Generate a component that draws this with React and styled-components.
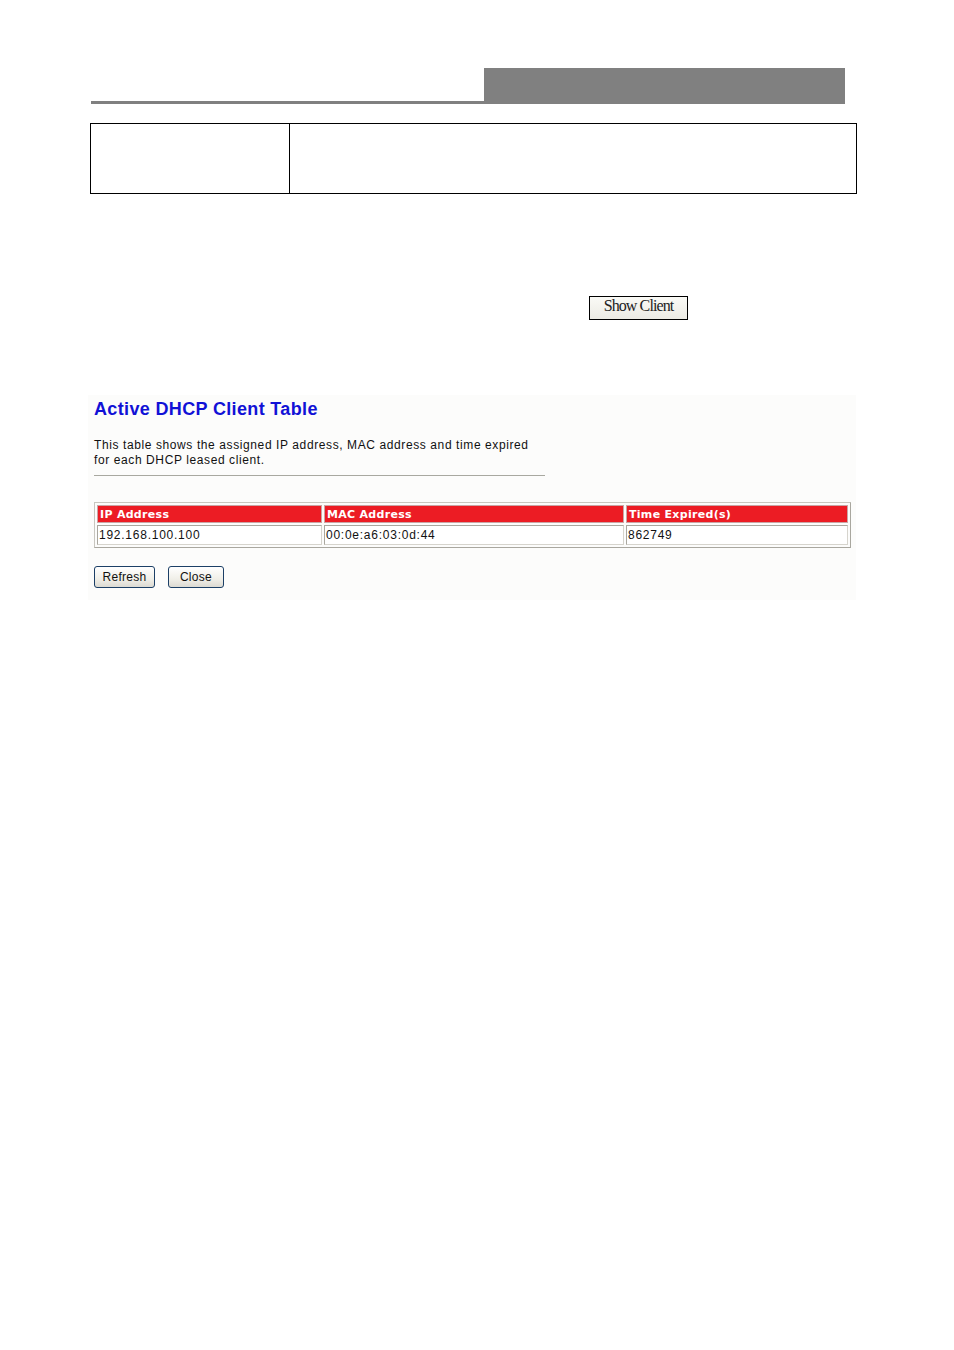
import React from "react";
import styled, { createGlobalStyle } from "styled-components";

const Global = createGlobalStyle`
  html, body { margin: 0; padding: 0; background: #fff; }
  body { font-family: "Liberation Sans", Arial, sans-serif; }
`;

const Page = styled.div`
  width: 954px;
  height: 1350px;
  padding-top: 68px;
  box-sizing: border-box;
`;

const Header = styled.div`
  display: flex;
  align-items: flex-end;
  margin-left: 91px;
  width: 754px;
`;

const HeaderRule = styled.div`
  flex: 1;
  height: 3px;
  background: #808080;
`;

const HeaderBlock = styled.div`
  width: 361px;
  height: 36px;
  background: #808080;
`;

const InfoBox = styled.div`
  display: grid;
  grid-template-columns: 198px 1fr;
  margin: 19px 0 0 90px;
  width: 767px;
  height: 71px;
  box-sizing: border-box;
  border: 1px solid #000;
`;

const InfoCell = styled.div`
  border-left: ${(p) => (p.$divider ? "1px solid #000" : "none")};
`;

const ShowRow = styled.div`
  margin: 102px 0 0 589px;
`;

const ShowButton = styled.button`
  width: 99px;
  height: 24px;
  box-sizing: border-box;
  border: 1px solid #000;
  background: linear-gradient(#fafaf6, #ecebe4);
  font-family: "Liberation Serif", "Times New Roman", serif;
  font-size: 16px;
  letter-spacing: -0.9px;
  color: #222;
  padding: 0 0 5px;
  line-height: 18px;
`;

const Panel = styled.div`
  margin: 75px 0 0 88px;
  width: 768px;
  height: 205px;
  box-sizing: border-box;
  background: #fcfcfb;
  padding: 3px 0 0 6px;
`;

const Title = styled.h1`
  margin: 0;
  font-family: "Liberation Sans", Arial, sans-serif;
  font-weight: bold;
  font-size: 18px;
  line-height: 22px;
  letter-spacing: 0.35px;
  color: #1111d6;
`;

const Desc = styled.p`
  margin: 18px 0 0;
  font-family: "Liberation Sans", Arial, sans-serif;
  font-size: 12px;
  line-height: 15px;
  color: #111;
  width: 445px;
  letter-spacing: 0.6px;
`;

const Rule = styled.div`
  width: 451px;
  height: 1px;
  background: #a8a8a0;
  margin-top: 7px;
`;

const Table = styled.div`
  margin-top: 26px;
  width: 757px;
  box-sizing: border-box;
  border: 1px solid #c8c6bf;
  border-right-color: #a9a79f;
  border-bottom-color: #a9a79f;
  padding: 2px;
  display: grid;
  grid-template-columns: 225px 300px 1fr;
  gap: 2px;
`;

const HeadCell = styled.div`
  height: 18px;
  box-sizing: border-box;
  background: #ec1c24;
  border: 1px solid #c9a6a6;
  color: #fff;
  font-family: "DejaVu Sans", Verdana, sans-serif;
  font-weight: bold;
  font-size: 11px;
  line-height: 17px;
  padding-left: 2px;
  letter-spacing: 0.3px;
`;

const DataCell = styled.div`
  height: 20px;
  box-sizing: border-box;
  background: #fff;
  border: 1px solid #d6d4cd;
  border-top-color: #a9a79f;
  border-left-color: #a9a79f;
  color: #111;
  font-family: "Liberation Sans", Arial, sans-serif;
  font-size: 12px;
  line-height: 18px;
  padding-left: 1px;
  letter-spacing: 0.75px;
`;

const Buttons = styled.div`
  display: flex;
  gap: 13px;
  margin-top: 18px;
`;

const SmallButton = styled.button`
  width: ${(p) => p.$w}px;
  height: 22px;
  box-sizing: border-box;
  border: 1px solid #1c3f66;
  border-radius: 3px;
  background: linear-gradient(#ffffff, #f0efe8 60%, #dcdad2);
  font-family: "Liberation Sans", Arial, sans-serif;
  font-size: 12px;
  letter-spacing: 0.3px;
  color: #111;
  padding: 0;
`;

export default function App() {
  return (
    <>
      <Global />
      <Page>
        <Header>
          <HeaderRule />
          <HeaderBlock />
        </Header>
        <InfoBox>
          <InfoCell />
          <InfoCell $divider />
        </InfoBox>
        <ShowRow>
          <ShowButton>Show Client</ShowButton>
        </ShowRow>
        <Panel>
          <Title>Active DHCP Client Table</Title>
          <Desc>
            This table shows the assigned IP address, MAC address and time expired
            for each DHCP leased client.
          </Desc>
          <Rule />
          <Table>
            <HeadCell>IP Address</HeadCell>
            <HeadCell>MAC Address</HeadCell>
            <HeadCell>Time Expired(s)</HeadCell>
            <DataCell>192.168.100.100</DataCell>
            <DataCell>00:0e:a6:03:0d:44</DataCell>
            <DataCell>862749</DataCell>
          </Table>
          <Buttons>
            <SmallButton $w={61}>Refresh</SmallButton>
            <SmallButton $w={56}>Close</SmallButton>
          </Buttons>
        </Panel>
      </Page>
    </>
  );
}
